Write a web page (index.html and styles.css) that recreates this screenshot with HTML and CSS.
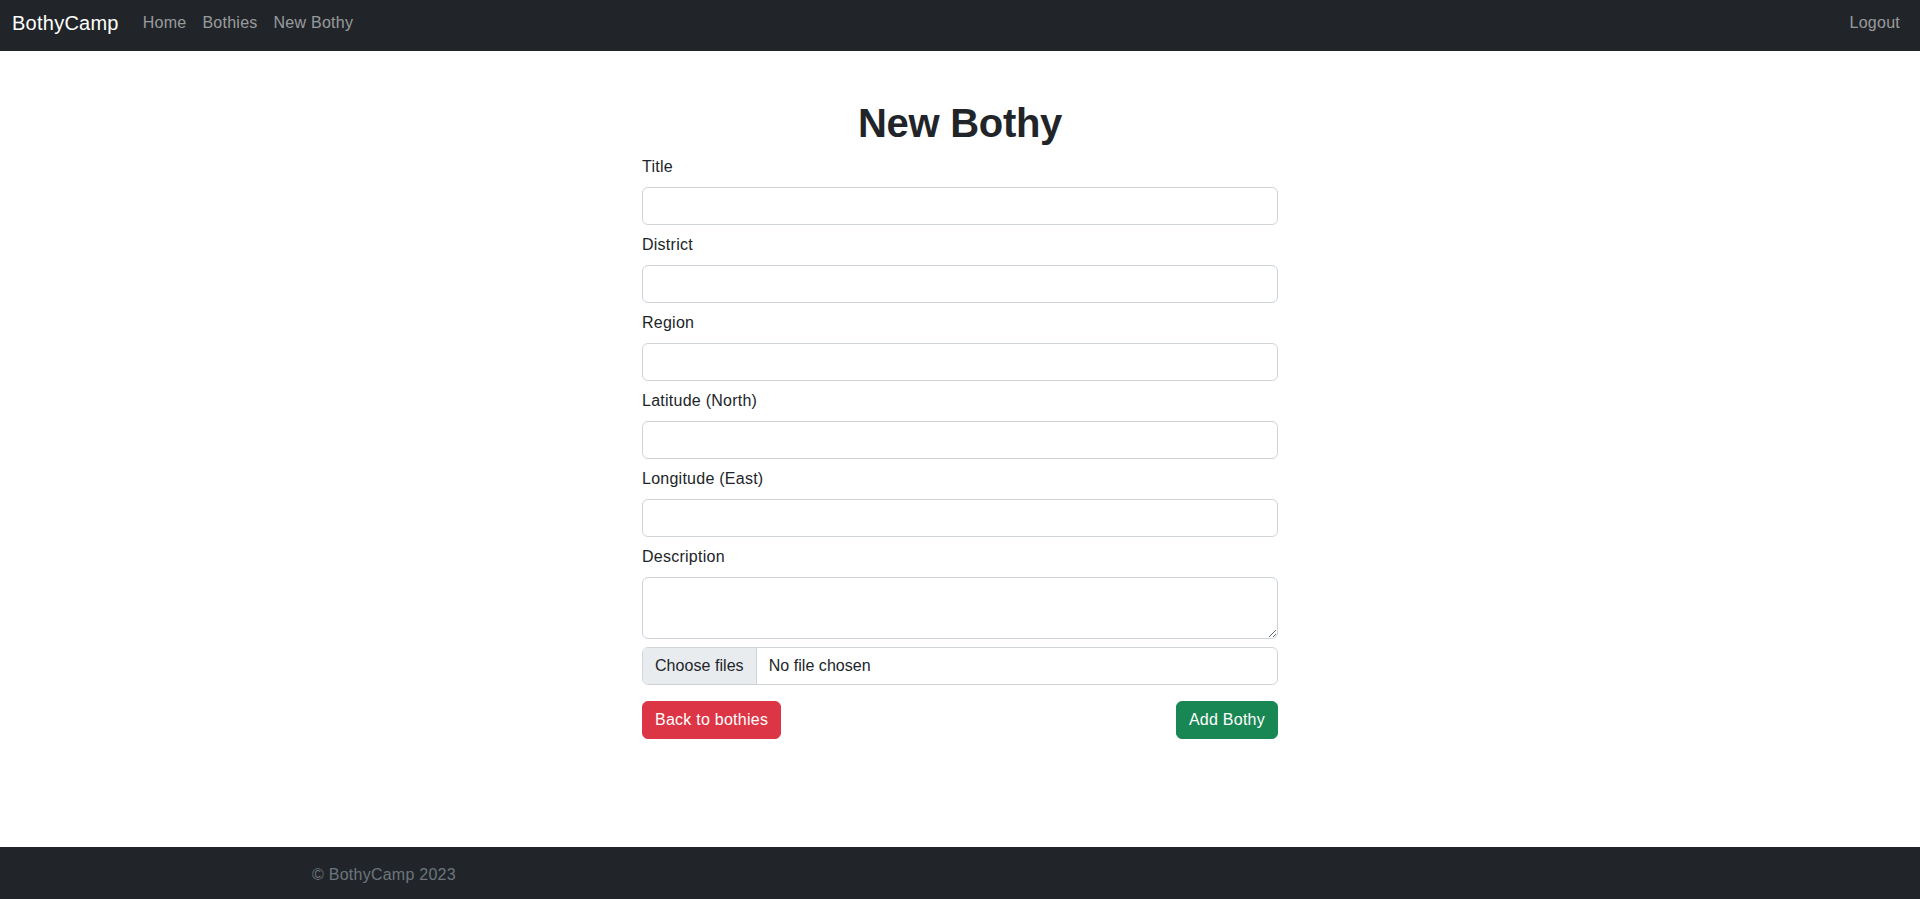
FILE: index.html
```html
<!DOCTYPE html>
<html lang="en">
<head>
<meta charset="utf-8">
<title>New Bothy - BothyCamp</title>
<link rel="stylesheet" href="styles.css">
</head>
<body>
<nav class="navbar">
  <div class="nav-inner">
    <a class="brand" href="#">BothyCamp</a>
    <div class="nav-links">
      <a class="nav-link" href="#">Home</a>
      <a class="nav-link" href="#">Bothies</a>
      <a class="nav-link" href="#">New Bothy</a>
    </div>
    <div class="nav-right">
      <a class="nav-link" href="#">Logout</a>
    </div>
  </div>
</nav>

<main class="main">
  <div class="form-col">
    <h1 class="page-title">New Bothy</h1>
    <form class="form">
      <div class="field">
        <label class="field-label" for="title">Title</label>
        <input class="control" type="text" id="title">
      </div>
      <div class="field">
        <label class="field-label" for="district">District</label>
        <input class="control" type="text" id="district">
      </div>
      <div class="field">
        <label class="field-label" for="region">Region</label>
        <input class="control" type="text" id="region">
      </div>
      <div class="field">
        <label class="field-label" for="lat">Latitude (North)</label>
        <input class="control" type="text" id="lat">
      </div>
      <div class="field">
        <label class="field-label" for="lng">Longitude (East)</label>
        <input class="control" type="text" id="lng">
      </div>
      <div class="field">
        <label class="field-label" for="desc">Description</label>
        <textarea class="control textarea" id="desc" rows="2"></textarea>
      </div>
      <div class="field field-file">
        <label class="file-control" for="images">
          <input class="file-input" type="file" id="images" multiple>
          <span class="file-btn">Choose files</span>
          <span class="file-name">No file chosen</span>
        </label>
      </div>
      <div class="actions">
        <a class="btn btn-danger" href="#">Back to bothies</a>
        <button class="btn btn-success" type="button">Add Bothy</button>
      </div>
    </form>
  </div>
</main>

<footer class="footer">
  <div class="footer-inner">
    <span class="footer-text">&copy; BothyCamp 2023</span>
  </div>
</footer>
</body>
</html>
```

FILE: styles.css
```css
* { box-sizing: border-box; }

html, body {
  margin: 0;
  padding: 0;
}

body {
  min-height: 100vh;
  display: flex;
  flex-direction: column;
  font-family: "Liberation Sans", Arial, sans-serif;
  font-size: 16px;
  line-height: 1.5;
  letter-spacing: 0.25px;
  color: #212529;
  background: #fff;
}

a { text-decoration: none; }

/* Navbar */
.navbar {
  background: #212529;
  height: 51px;
}

.nav-inner {
  height: 100%;
  padding: 8px 12px 0;
  display: flex;
  align-items: flex-start;
}

.brand {
  color: #fff;
  font-size: 20px;
  line-height: 30px;
  margin-right: 16px;
}

.nav-links {
  display: flex;
}

.nav-link {
  color: rgba(255, 255, 255, 0.55);
  font-size: 16px;
  line-height: 24px;
  padding: 3px 8px;
}

.nav-right {
  margin-left: auto;
  display: flex;
}

/* Main */
.main {
  flex: 1 0 auto;
}

.form-col {
  width: 636px;
  margin: 48px auto 0;
}

.page-title {
  margin: 0 0 8px;
  text-align: center;
  font-size: 40px;
  line-height: 48px;
  font-weight: 700;
  letter-spacing: -0.3px;
}

.field {
  margin-bottom: 8px;
}

.field-label {
  display: block;
  margin-bottom: 8px;
  line-height: 24px;
}

.control {
  display: block;
  width: 100%;
  height: 38px;
  padding: 6px 12px;
  font-family: inherit;
  font-size: 16px;
  line-height: 24px;
  color: #212529;
  background: #fff;
  border: 1px solid #ced4da;
  border-radius: 6px;
  outline: none;
}

.textarea {
  height: 62px;
  resize: vertical;
}

.field-file {
  margin-bottom: 16px;
}

.file-control {
  display: flex;
  height: 38px;
  border: 1px solid #ced4da;
  border-radius: 6px;
  overflow: hidden;
  background: #fff;
  cursor: pointer;
  letter-spacing: 0.05px;
}

.file-input {
  display: none;
}

.file-btn {
  padding: 6px 12px;
  line-height: 24px;
  background: #e9ecef;
  border-right: 1px solid #ced4da;
  color: #212529;
}

.file-name {
  padding: 6px 12px;
  line-height: 24px;
  color: #212529;
}

.actions {
  display: flex;
  justify-content: space-between;
}

.btn {
  display: inline-block;
  padding: 6px 12px;
  font-family: inherit;
  font-size: 16px;
  line-height: 24px;
  letter-spacing: 0.25px;
  color: #fff;
  border: 1px solid transparent;
  border-radius: 6px;
  cursor: pointer;
}

.btn-danger {
  background: #dc3545;
  border-color: #dc3545;
}

.btn-success {
  background: #198754;
  border-color: #198754;
}

/* Footer */
.footer {
  background: #212529;
  padding: 16px 0 12px;
  flex-shrink: 0;
}

.footer-inner {
  width: 1320px;
  margin: 0 auto;
  padding: 0 12px;
}

.footer-text {
  color: #6c757d;
  line-height: 24px;
}
```
